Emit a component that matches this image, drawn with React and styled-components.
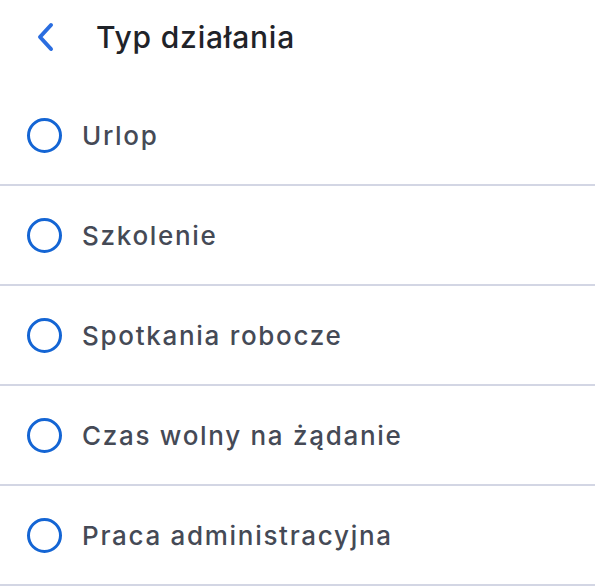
import styled, { createGlobalStyle } from 'styled-components'

const GlobalStyle = createGlobalStyle`
  body {
    margin: 0;
    background: #ffffff;
    font-family: Inter, 'Noto Sans', sans-serif;
  }
`

const Screen = styled.div`
  width: 595px;
  height: 587px;
  background: #ffffff;
  overflow: hidden;
`

const Header = styled.div`
  box-sizing: border-box;
  display: flex;
  align-items: center;
  height: 74px;
  padding-left: 34px;
  gap: 40px;
`

const BackButton = styled.button`
  display: flex;
  align-items: center;
  justify-content: center;
  width: 22px;
  height: 36px;
  padding: 0;
  border: none;
  background: none;
  color: #2a6de0;
`

const Title = styled.h1`
  margin: 0;
  font-size: 30px;
  font-weight: 500;
  letter-spacing: 0.8px;
  color: #1f2329;
`

const List = styled.ul`
  list-style: none;
  margin: 0;
  padding: 0;
`

const Option = styled.li`
  box-sizing: border-box;
  display: flex;
  align-items: center;
  gap: 20px;
  height: 100px;
  padding-left: 27px;
  border-bottom: 2px solid #d3d6e4;
  &:first-child {
    height: 112px;
    padding-top: 12px;
  }
`

const Radio = styled.span`
  box-sizing: border-box;
  width: 35px;
  height: 35px;
  border-radius: 50%;
  border: 3px solid #1465d4;
  flex-shrink: 0;
`

const Label = styled.span`
  font-size: 26px;
  font-weight: 500;
  letter-spacing: 1.7px;
  color: #454a56;
`

const options = [
  'Urlop',
  'Szkolenie',
  'Spotkania robocze',
  'Czas wolny na żądanie',
  'Praca administracyjna',
]

export default function App() {
  return (
    <Screen>
      <GlobalStyle />
      <Header>
        <BackButton aria-label='Wstecz'>
          <svg width='20' height='32' viewBox='0 0 20 32' fill='none'>
            <path
              d='M16 4 L5 16 L16 28'
              stroke='currentColor'
              strokeWidth='4'
              strokeLinecap='round'
              strokeLinejoin='round'
            />
          </svg>
        </BackButton>
        <Title>Typ działania</Title>
      </Header>
      <List>
        {options.map(o => (
          <Option key={o}>
            <Radio />
            <Label>{o}</Label>
          </Option>
        ))}
      </List>
    </Screen>
  )
}
